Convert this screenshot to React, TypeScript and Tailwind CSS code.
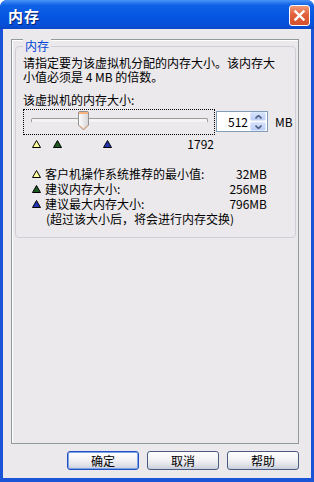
import clsx from "clsx";

const Tri = ({ fill }: { fill: string }) => (
  <svg width="9" height="8" viewBox="0 0 9 8" className="shrink-0">
    <polygon points="4.5,0.5 8.5,7.5 0.5,7.5" fill={fill} stroke="#000" strokeWidth="1" />
  </svg>
);

const CloseButton = () => (
  <div className="w-[21px] h-[21px] rounded-[3px] border border-white bg-[linear-gradient(to_bottom,#f29a78_0%,#e2613d_45%,#d4502c_100%)] flex items-center justify-center">
    <svg width="11" height="11" viewBox="0 0 11 11">
      <path d="M1.5 1.5 L9.5 9.5 M9.5 1.5 L1.5 9.5" stroke="#fff" strokeWidth="2.4" strokeLinecap="square" />
    </svg>
  </div>
);

const SpinHalf = ({ up }: { up?: boolean }) => (
  <div className="h-[9px] rounded-[2px] border border-[#dbe5fb] bg-[linear-gradient(to_bottom,#d5e1fc_0%,#bccdf5_100%)] flex items-center justify-center">
    <svg width="7" height="4" viewBox="0 0 7 4">
      <path d={up ? "M0.5 3.5 L3.5 0.5 L6.5 3.5" : "M0.5 0.5 L3.5 3.5 L6.5 0.5"} fill="none" stroke="#4d6185" strokeWidth="1.6" />
    </svg>
  </div>
);

const XpButton = ({ label, primary }: { label: string; primary?: boolean }) => (
  <button
    className={clsx(
      "w-[72px] h-[19px] rounded-[3px] border text-[12px] leading-none text-black bg-[linear-gradient(to_bottom,#ffffff_0%,#f3f3f5_45%,#e2e3ea_75%,#c7cddb_100%)]",
      primary ? "border-[#1f4fc0] shadow-[inset_0_0_0_1px_#7fa2ea]" : "border-[#4b5a80]"
    )}
  >
    {label}
  </button>
);

const legend = [
  { color: "#ffff9c", label: "客户机操作系统推荐的最小值:", value: "32MB" },
  { color: "#1d5a22", label: "建议内存大小:", value: "256MB" },
  { color: "#2133b0", label: "建议最大内存大小:", value: "796MB" },
];

export default function App() {
  return (
    <div className="w-[314px] h-[482px] flex flex-col bg-[#1a55d8] rounded-t-[7px] overflow-hidden font-['Noto_Sans_CJK_SC',sans-serif] text-[12px] text-black">
      {/* title bar */}
      <div className="h-[29px] shrink-0 flex items-center justify-between pl-[8px] pr-[4px] pt-[2px] bg-[linear-gradient(to_bottom,#4a94f7_0%,#0f62e6_18%,#0556e2_55%,#0650d8_85%,#0a47c8_100%)]">
        <span className="text-white font-bold text-[15px] leading-none tracking-[1px] [text-shadow:1px_1px_0_#0a2470]">内存</span>
        <CloseButton />
      </div>

      {/* body */}
      <div className="flex-1 mx-[3px] mb-[4px] bg-[#ece9ec] flex flex-col pt-[10px] pl-[8px]">
        <div className="w-[288px] h-[405px] border border-[#919b9c] shadow-[inset_1px_1px_0_#ffffff]">
          <div className="relative ml-[3px] mt-[6px] w-[281px] h-[192px] rounded-[4px] border border-[#d0ced6] pl-[7px] pt-[9px]">
            <span className="absolute -top-[8px] left-[7px] px-[2px] leading-[14px] bg-[#ece9ec] text-[#0046d5]">内存</span>

            <div className="leading-[14px]">
              <div>请指定要为该虚拟机分配的内存大小。该内存大</div>
              <div>小值必须是 4 MB 的倍数。</div>
            </div>

            <div className="mt-[9px] leading-[14px]">该虚拟机的内存大小:</div>

            <div className="mt-[2px] flex items-start">
              <div className="w-[192px] h-[26px] border border-dotted border-black">
                <div className="relative ml-[7px] mt-[8px] w-[177px] h-[5px] rounded-[2px] border border-[#9d9c99] border-b-[#e8e8e8] bg-[#f4f4f4]">
                  <svg width="11" height="20" viewBox="0 0 11 20" className="absolute left-[46px] -top-[8px]">
                    <defs>
                      <linearGradient id="thumb" x1="0" x2="1" y1="0" y2="0">
                        <stop offset="0" stopColor="#ffffff" />
                        <stop offset="1" stopColor="#d5d5d8" />
                      </linearGradient>
                    </defs>
                    <path d="M0.5 2 Q0.5 0.5 2 0.5 H9 Q10.5 0.5 10.5 2 V14 L5.5 19 L0.5 14 Z" fill="url(#thumb)" stroke="#8f8f94" />
                    <rect x="1" y="1" width="9" height="2" fill="#f3b27e" />
                    <path d="M1.5 14.5 L5.5 18 L9.5 14.5" fill="none" stroke="#f1a36a" />
                  </svg>
                </div>
              </div>

              <div className="ml-[1px] mt-[2px] w-[52px] h-[21px] border border-[#7f9db9] bg-white flex items-center">
                <span className="flex-1 text-right pr-[2px] leading-none">512</span>
                <div className="w-[16px] mr-[1px] flex flex-col gap-[1px]">
                  <SpinHalf up />
                  <SpinHalf />
                </div>
              </div>

              <div className="ml-[7px] mt-[2px] h-[21px] flex items-center leading-none">MB</div>
            </div>

            <div className="mt-[2px] w-[191px] h-[14px] flex items-center">
              <div className="ml-[9px]"><Tri fill="#ffff9c" /></div>
              <div className="ml-[12px]"><Tri fill="#1d5a22" /></div>
              <div className="ml-[41px]"><Tri fill="#2133b0" /></div>
              <span className="ml-auto leading-[14px]">1792</span>
            </div>

            <div className="mt-[15px] w-[244px] leading-[15px]">
              {legend.map((r) => (
                <div key={r.label} className="flex items-center">
                  <div className="ml-[9px]"><Tri fill={r.color} /></div>
                  <span className="ml-[4px]">{r.label}</span>
                  <span className="ml-auto">{r.value}</span>
                </div>
              ))}
              <div className="pl-[23px]">(超过该大小后，将会进行内存交换)</div>
            </div>
          </div>
        </div>

        <div className="mt-[7px] w-[288px] flex justify-end gap-[8px] pr-[-1px]">
          <XpButton label="确定" primary />
          <XpButton label="取消" />
          <XpButton label="帮助" />
        </div>
      </div>
    </div>
  );
}
